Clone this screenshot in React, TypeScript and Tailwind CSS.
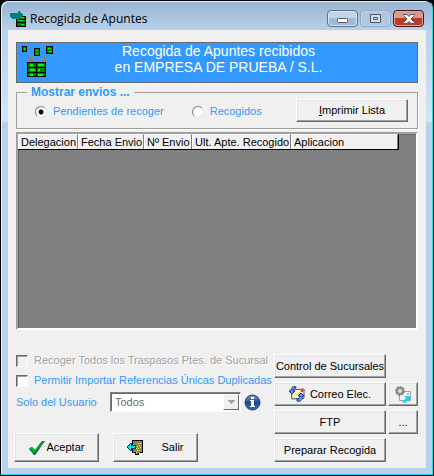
import type { ButtonHTMLAttributes, ReactNode } from 'react';

const columns = [
  { label: 'Delegacion', width: 'w-[60px]' },
  { label: 'Fecha Envio', width: 'w-[66px]' },
  { label: 'Nº Envio', width: 'w-[48px]' },
  { label: 'Ult. Apte. Recogido', width: 'w-[99px]' },
  { label: 'Aplicacion', width: 'w-[107px]' },
];

interface PushButtonProps extends ButtonHTMLAttributes<HTMLButtonElement> {
  className?: string;
  children: ReactNode;
}

function PushButton({ className = '', children, ...rest }: PushButtonProps) {
  return (
    <button
      type="button"
      className={`flex items-center justify-center whitespace-nowrap border border-t-white border-l-white border-r-[#696969] border-b-[#696969] bg-[#f0f0f0] text-black shadow-[inset_-1px_-1px_0_#a0a0a0,inset_1px_1px_0_#e3e3e3] ${className}`}
      {...rest}
    >
      {children}
    </button>
  );
}

function AppIcon() {
  return (
    <svg width="16" height="16" viewBox="0 0 16 16" shapeRendering="crispEdges" aria-hidden="true">
      <rect x="6" y="5" width="10" height="11" fill="#000" />
      <path d="M7 6h8v2H7zM7 9h8v2H7zM7 12h8v3H7z" fill="#008000" />
      <path d="M11 6h3v1h-3zM9 9h4v1H9zM11 13h3v1h-3z" fill="#00ff00" />
      <path d="M0 2h8V0h1l4 4-4 4-1 1H7V8H2V7H1V6H0z" fill="#008080" />
    </svg>
  );
}

function NetworkIcon() {
  return (
    <svg width="32" height="32" viewBox="0 0 32 32" shapeRendering="crispEdges" aria-hidden="true">
      <path d="M0 0h5v6H0zM12 2h6v8h-6zM24 0h7v8h-7zM5 16h19v15H5z" fill="#000" />
      <path d="M1 1h3v4H1zM13 3h4v6h-4zM25 1h5v6h-5z" fill="#008000" />
      <path d="M6 17h8v4H6zM15 17h8v4h-8zM6 22h8v4H6zM15 22h8v4h-8zM6 27h8v3H6zM15 27h8v3h-8z" fill="#008000" />
      <path
        d="M2 2h1v2H2zM14 4h2v1h-2zM14 7h2v1h-2zM26 2h3v1h-3zM27 5h3v1h-3zM8 18h3v2H8zM16 18h6v2h-6zM8 23h5v2H8zM16 23h2v2h-2zM8 28h3v2H8zM16 28h5v2h-5z"
        fill="#00ff00"
      />
      <path d="M2 7l8 7M6 14h4v-4M15 10v4M13 12l2 2 2-2M28 8l-6 6M22 10v4h4" fill="none" stroke="#808080" />
    </svg>
  );
}

function CheckIcon() {
  return (
    <svg width="16" height="14" viewBox="0 0 16 14" aria-hidden="true">
      <path d="M0 8l3-2 3 3 7-9h3L6 14H5z" fill="#083878" />
      <path d="M0 7l3-1 3 3 8-9h2L5 13z" fill="#00b818" />
    </svg>
  );
}

function DoorIcon() {
  return (
    <svg width="17" height="15" viewBox="0 0 17 15" shapeRendering="crispEdges" aria-hidden="true">
      <path d="M5 0h11v13h-4v2H8v-2H5z" fill="#000" />
      <path d="M6 1h9v11H6z" fill="#808080" />
      <path d="M9 3h1V2h5v10h-2v1h-2v1H9z" fill="#909030" />
      <path
        d="M11 3h1v1h-1zM13 3h1v1h-1zM10 6h1v1h-1zM12 5h1v1h-1zM9 8h1v1H9zM11 8h1v1h-1zM13 7h1v1h-1zM10 10h1v1h-1zM12 10h1v1h-1zM9 12h1v1H9z"
        fill="#e8e890"
      />
      <path d="M0 6h1V5h1V4h1V3h2v2h4v4H5v2H3v-1H2V9H1V8H0z" fill="#004858" />
      <path d="M1 6h1V5h1V4h1v2h4v2H4v2H3V9H2V8H1z" fill="#00e8f8" />
    </svg>
  );
}

function MailSyncIcon() {
  return (
    <svg width="16" height="16" viewBox="0 0 16 16" aria-hidden="true">
      <path d="M2 4l13-1v9L3 13z" fill="#fff8c8" stroke="#504830" />
      <path d="M4 6l4 3 5-4" fill="none" stroke="#e8d078" />
      <path d="M12 4h2v2h-2z" fill="#f02020" />
      <path d="M7 1C4 0 2 1 2 5H0l3 3 3-3H4c0-2 1-3 3-3z" fill="#58a8f8" stroke="#1030a8" />
      <path d="M8 15c3 1 6-1 5-5h2l-3-3-3 3h2c0 2-1 3-3 3z" fill="#58a8f8" stroke="#1030a8" />
    </svg>
  );
}

function MailSettingsIcon() {
  return (
    <svg width="17" height="17" viewBox="0 0 17 17" aria-hidden="true">
      <path d="M4.500 5.500h11v9h-11z" fill="#f8f8f8" stroke="#a0a0a0" />
      <path d="M12 7h2v2h-2z" fill="#b0b0b0" />
      <circle cx="5" cy="5" r="4" fill="none" stroke="#888" strokeWidth="2" strokeDasharray="2 1" />
      <circle cx="5" cy="5" r="3" fill="#ddd" stroke="#888" strokeWidth="2" />
      <path d="M7 16l4-4-2-2h6v6l-2-2-3 3z" fill="#20d0f0" />
    </svg>
  );
}

function InfoIcon() {
  return (
    <svg width="17" height="17" viewBox="0 0 17 17" aria-hidden="true">
      <defs>
        <linearGradient id="info" x1="0" y1="0" x2="0" y2="1">
          <stop offset="0" stopColor="#8098c0" />
          <stop offset=".5" stopColor="#1c4890" />
          <stop offset="1" stopColor="#3870c0" />
        </linearGradient>
      </defs>
      <circle cx="8.5" cy="8.5" r="7.5" fill="url(#info)" stroke="#204078" />
      <path d="M7 3h3v2H7zM6 6h4v6h1v1H6v-1h1V7H6z" fill="#fff" />
    </svg>
  );
}

function TitleBar() {
  return (
    <header className="flex h-[29px] items-start pr-[2px] pl-[2px]">
      <div className="flex flex-1 items-center gap-1 pt-[9px]">
        <AppIcon />
        <h1 className="pt-px font-['Open_Sans',sans-serif] text-[12px] leading-4 text-black">Recogida de Apuntes</h1>
      </div>
      <div className="flex gap-[2px] pt-[9px]">
        <button
          type="button"
          aria-label="Minimizar"
          className="flex h-[17px] w-[31px] items-center justify-center rounded-sm border border-[#60728a] bg-linear-to-b from-[#c3d5ea] from-50% to-[#a3bbd6] to-50% shadow-[inset_0_0_0_1px_#d6e4f3]"
        >
          <svg width="11" height="5" viewBox="0 0 11 5" className="mt-1" aria-hidden="true">
            <rect x=".5" y=".5" width="10" height="4" rx="1" fill="#fff" stroke="#535666" />
          </svg>
        </button>
        <button
          type="button"
          aria-label="Maximizar"
          disabled
          className="flex h-[17px] w-[31px] items-center justify-center rounded-sm border border-[#8fa8c4] bg-[#b0c7e0] shadow-[inset_0_0_0_1px_#bfd3e9]"
        >
          <svg width="11" height="9" viewBox="0 0 11 9" aria-hidden="true">
            <path d="M.5.5h10v8H.5zM3.5 3.5h4v2h-4z" fill="#d4dde8" stroke="#535666" />
          </svg>
        </button>
        <button
          type="button"
          aria-label="Cerrar"
          className="flex h-[17px] w-[31px] items-center justify-center rounded-sm border border-[#431422] bg-linear-to-b from-[#dc9a8b] from-50% to-[#bf3a22] to-50% shadow-[inset_0_0_0_1px_#e0a99c]"
        >
          <svg width="12" height="10" viewBox="0 0 12 10" aria-hidden="true">
            <path
              d="M.5.5H4l2 2 2-2h3.5v1L8 5l3.5 3.5v1H8l-2-2-2 2H.5v-1L4 5 .5 1.5z"
              fill="#fff"
              stroke="#535666"
            />
          </svg>
        </button>
      </div>
    </header>
  );
}

export default function App() {
  return (
    <div className="flex min-h-screen flex-col bg-black pr-px pb-px font-['Liberation_Sans',Arial,sans-serif] text-[11px] leading-[13px]">
      <div className="flex flex-1 flex-col rounded-t-lg border border-t-black border-r-[#22d3ee] border-b-[#22d3ee] border-l-black bg-[#b9d1ea] bg-[linear-gradient(#99b4d1,#b9d1ea_30px,#d3e4f6_120px,#b9d1ea_122px)] pr-[6px] pb-[6px] pl-[7px] shadow-[inset_1px_1px_0_#e8f1fa]">
        <TitleBar />
        <main className="flex flex-1 flex-col bg-[#f0f0f0] px-2 pt-3 pb-[6px]">
          <section className="flex h-[41px] border border-[#696969] bg-[#3399ff]">
            <div className="pt-[3px] pl-[5px]">
              <NetworkIcon />
            </div>
            <h2 className="flex-1 pr-[34px] text-center text-[14px] leading-4 text-white">
              Recogida de Apuntes recibidos
              <br />
              en EMPRESA DE PRUEBA / S.L.
            </h2>
          </section>

          <fieldset className="mt-[3px] flex h-[43px] border border-[#a0a0a0] pr-[9px] pl-[18px] shadow-[1px_1px_0_#fff]">
            <legend className="-ml-2 px-1 text-[12px] leading-[13px] font-bold text-[#3399ff]">Mostrar envios ...</legend>
            <div className="flex flex-1 items-start">
              <div className="flex flex-1 gap-7 pt-[6px] text-[#3399ff]">
                <label className="flex items-center gap-[6px]">
                  <input
                    type="radio"
                    name="envios"
                    defaultChecked
                    className="size-3 appearance-none rounded-full border border-t-[#808080] border-r-[#e3e3e3] border-b-[#e3e3e3] border-l-[#808080] bg-white checked:bg-[radial-gradient(#000_2px,#fff_3px)]"
                  />
                  Pendientes de recoger
                </label>
                <label className="flex items-center gap-[6px]">
                  <input
                    type="radio"
                    name="envios"
                    className="size-3 appearance-none rounded-full border border-t-[#808080] border-r-[#e3e3e3] border-b-[#e3e3e3] border-l-[#808080] bg-white checked:bg-[radial-gradient(#000_2px,#fff_3px)]"
                  />
                  Recogidos
                </label>
              </div>
              <PushButton className="h-[23px] w-[112px]">
                <span>
                  <u>I</u>mprimir Lista
                </span>
              </PushButton>
            </div>
          </fieldset>

          <div className="mt-[3px] min-h-[120px] flex-1 border-2 border-t-[#a0a0a0] border-r-white border-b-white border-l-[#a0a0a0] bg-[#808080] shadow-[inset_1px_1px_0_#696969]">
            <table className="w-[380px] table-fixed border-separate border-spacing-0 border-r border-b border-black">
              <thead>
                <tr>
                  {columns.map((column) => (
                    <th
                      key={column.label}
                      scope="col"
                      className={`h-[15px] border-t border-r border-l border-t-white border-r-[#808080] border-l-white bg-[#f0f0f0] pl-[2px] text-left font-normal whitespace-nowrap text-black ${column.width}`}
                    >
                      {column.label}
                    </th>
                  ))}
                </tr>
              </thead>
            </table>
          </div>

          <div className="flex justify-between pt-6">
            <div className="flex flex-col">
              <label className="flex items-center gap-[6px] whitespace-nowrap text-[#a0a0a0] [text-shadow:1px_1px_0_#fff]">
                <input
                  type="checkbox"
                  disabled
                  className="size-3 appearance-none border border-t-[#696969] border-r-white border-b-white border-l-[#696969] bg-[#f0f0f0] shadow-[inset_1px_1px_0_#a0a0a0]"
                />
                Recoger Todos los Traspasos Ptes. de Sucursal
              </label>
              <label className="mt-[7px] flex items-center gap-[6px] whitespace-nowrap text-[#3399ff]">
                <input
                  type="checkbox"
                  className="size-3 appearance-none border border-t-[#696969] border-r-white border-b-white border-l-[#696969] bg-white shadow-[inset_1px_1px_0_#a0a0a0] checked:bg-[#3399ff]"
                />
                Permitir Importar Referencias Únicas Duplicadas
              </label>
              <div className="mt-[5px] flex items-center">
                <label htmlFor="usuario" className="w-[94px] text-[#3399ff]">
                  Solo del Usuario
                </label>
                <div className="relative mr-[3px] w-[131px]">
                  <select
                    id="usuario"
                    disabled
                    className="block h-5 w-full appearance-none border border-t-[#808080] border-r-white border-b-white border-l-[#808080] bg-white pl-1 text-[11px] text-[#6d6d6d] opacity-100 shadow-[inset_1px_1px_0_#696969]"
                  >
                    <option>Todos</option>
                  </select>
                  <span className="pointer-events-none absolute top-[2px] right-[2px] flex h-4 w-4 items-center justify-center border border-t-white border-r-[#696969] border-b-[#696969] border-l-white bg-[#f0f0f0]">
                    <svg width="7" height="4" viewBox="0 0 7 4" shapeRendering="crispEdges" aria-hidden="true">
                      <path d="M0 0h7L3.5 4z" fill="#a0a0a0" />
                    </svg>
                  </span>
                </div>
                <InfoIcon />
              </div>
              <div className="-ml-[2px] mt-auto flex gap-[14px]">
                <PushButton className="h-[29px] w-[85px] gap-[2px]">
                  <CheckIcon />
                  Aceptar
                </PushButton>
                <PushButton className="h-[29px] w-[85px] gap-[17px]">
                  <DoorIcon />
                  Salir
                </PushButton>
              </div>
            </div>

            <div className="grid grid-cols-[112px_30px] content-start gap-x-[2px] gap-y-1">
              <PushButton className="col-start-1 h-6">Control de Sucursales</PushButton>
              <PushButton className="col-start-1 h-6 gap-[5px]">
                <MailSyncIcon />
                Correo Elec.
              </PushButton>
              <PushButton className="h-6" aria-label="Configurar correo">
                <MailSettingsIcon />
              </PushButton>
              <PushButton className="h-6">FTP</PushButton>
              <PushButton className="h-6">...</PushButton>
              <PushButton className="col-start-1 h-6">Preparar Recogida</PushButton>
            </div>
          </div>
        </main>
      </div>
    </div>
  );
}
